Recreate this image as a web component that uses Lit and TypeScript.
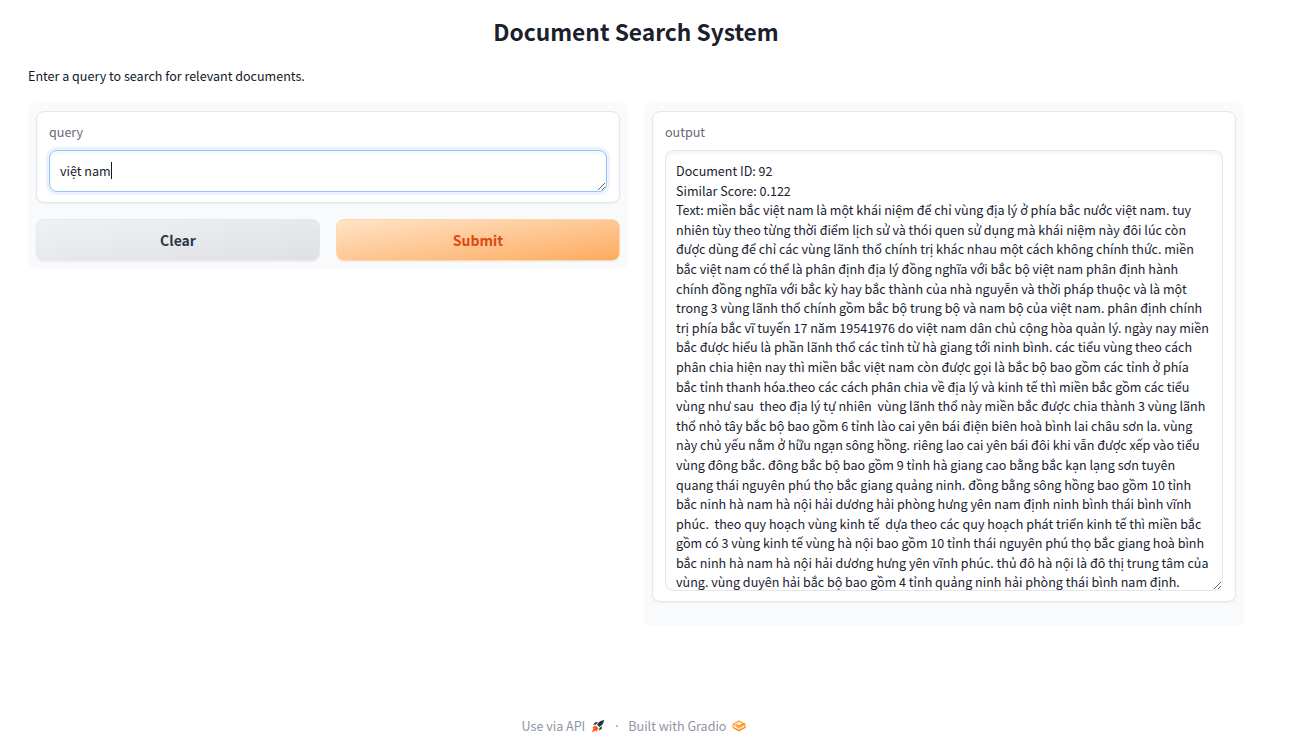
import { LitElement, html, css, svg } from "lit";
import { customElement, query, state } from "lit/decorators.js";

const RESULT = [
  "Document ID: 92",
  "Similar Score: 0.122",
  "Text: miền bắc việt nam là một khái niệm để chỉ vùng địa lý ở phía bắc nước việt nam. tuy",
  "nhiên tùy theo từng thời điểm lịch sử và thói quen sử dụng mà khái niệm này đôi lúc còn",
  "được dùng để chỉ các vùng lãnh thổ chính trị khác nhau một cách không chính thức. miền",
  "bắc việt nam có thể là phân định địa lý đồng nghĩa với bắc bộ việt nam phân định hành",
  "chính đồng nghĩa với bắc kỳ hay bắc thành của nhà nguyễn và thời pháp thuộc và là một",
  "trong 3 vùng lãnh thổ chính gồm bắc bộ trung bộ và nam bộ của việt nam. phân định chính",
  "trị phía bắc vĩ tuyến 17 năm 19541976 do việt nam dân chủ cộng hòa quản lý. ngày nay miền",
  "bắc được hiểu là phần lãnh thổ các tỉnh từ hà giang tới ninh bình. các tiểu vùng theo cách",
  "phân chia hiện nay thì miền bắc việt nam còn được gọi là bắc bộ bao gồm các tỉnh ở phía",
  "bắc tỉnh thanh hóa.theo các cách phân chia về địa lý và kinh tế thì miền bắc gồm các tiểu",
  "vùng như sau  theo địa lý tự nhiên  vùng lãnh thổ này miền bắc được chia thành 3 vùng lãnh",
  "thổ nhỏ tây bắc bộ bao gồm 6 tỉnh lào cai yên bái điện biên hoà bình lai châu sơn la. vùng",
  "này chủ yếu nằm ở hữu ngạn sông hồng. riêng lao cai yên bái đôi khi vẫn được xếp vào tiểu",
  "vùng đông bắc. đông bắc bộ bao gồm 9 tỉnh hà giang cao bằng bắc kạn lạng sơn tuyên",
  "quang thái nguyên phú thọ bắc giang quảng ninh. đồng bằng sông hồng bao gồm 10 tỉnh",
  "bắc ninh hà nam hà nội hải dương hải phòng hưng yên nam định ninh bình thái bình vĩnh",
  "phúc.  theo quy hoạch vùng kinh tế  dựa theo các quy hoạch phát triển kinh tế thì miền bắc",
  "gồm có 3 vùng kinh tế vùng hà nội bao gồm 10 tỉnh thái nguyên phú thọ bắc giang hoà bình",
  "bắc ninh hà nam hà nội hải dương hưng yên vĩnh phúc. thủ đô hà nội là đô thị trung tâm của",
  "vùng. vùng duyên hải bắc bộ bao gồm 4 tỉnh quảng ninh hải phòng thái bình nam định.",
].join("\n");

const rocket = svg`
  <path d="M15 1C12 1.400 9.700 2.700 8.200 4.600L7 6.500 9.500 9 11.400 7.800C13.300 6.300 14.500 4 15 1z" fill="#1f3340"/>
  <path d="M8 3.500 4.800 3.800 2.600 6.700 5.800 6.300z" fill="#1f3340"/>
  <path d="M12.500 8 12.200 11.200 9.300 13.400 9.700 10.200z" fill="#1f3340"/>
  <path d="M5.300 7.400 1.500 9.800 2.800 10.600 1 15 5.600 13.200 6.300 14.500 8.600 10.600z" fill="#ff5a10"/>`;

const gradio = svg`
  <path d="M8 2.300 14.800 6 8 9.700 1.200 6z" fill="#fff3df" stroke="#fba23a" stroke-width="1.600" stroke-linejoin="round"/>
  <path d="M1.200 9.600 8 13.400l6.800-3.800V7.400" fill="none" stroke="#f98a12" stroke-width="1.600" stroke-linejoin="round"/>
  <path d="M1.200 6v3.600" fill="none" stroke="#fba23a" stroke-width="1.200"/>
  <path d="M5 6.300 8 8l6.500-3" fill="none" stroke="#f98a12" stroke-width="1.300"/>
  <path d="M4.500 9.600 8 11.300 12 9.200" fill="none" stroke="#fcc98a" stroke-width="1"/>`;

@customElement("app-root")
export class AppRoot extends LitElement {
  @state() private text = "việt nam";
  @state() private output = RESULT;
  @query("#query") private field!: HTMLTextAreaElement;

  static styles = css`
    :host {
      display: block;
      box-sizing: border-box;
      padding: 16px 68px 16px 28px;
      background: #fff;
      color: #1a2230;
      font-family: "Source Sans Pro", "Noto Sans CJK JP", "Noto Sans", sans-serif;
      font-size: 14px;
      /* keeps fallback faces at the x-height of Source Sans */
      font-size-adjust: 0.487;
      line-height: 20px;
    }
    * { box-sizing: border-box; }
    h1 {
      margin: 0 0 18px;
      font-size: 26px;
      font-size-adjust: 0.475;
      line-height: 32px;
      font-weight: 600;
      text-align: center;
      color: #1a202c;
    }
    .intro { margin: 0 0 17px; color: #111827; }
    .columns {
      display: grid;
      grid-template-columns: 1fr 1fr;
      align-items: start;
      gap: 16px;
    }
    .panel {
      display: flex;
      flex-direction: column;
      gap: 16px;
      padding: 8px;
      border-radius: 8px;
      background: #f9fafb;
    }
    .results { padding-bottom: 24px; }
    .block {
      position: relative;
      display: flex;
      flex-direction: column;
      gap: 8px;
      padding: 10px 12px;
      border: 1px solid #e5e7eb;
      border-radius: 8px;
      background: #fff;
      box-shadow: 0 1px 2px rgba(0, 0, 0, 0.05);
    }
    label { color: #646a79; }
    textarea {
      display: block;
      width: 100%;
      margin: 0;
      padding: 10px;
      border: 1px solid #e5e7eb;
      border-radius: 8px;
      outline: none;
      background: #fff;
      box-shadow: inset 0 2px 4px rgba(0, 0, 0, 0.05);
      color: inherit;
      font: inherit;
      font-size-adjust: inherit;
      line-height: 1.4;
      overflow: hidden;
      resize: vertical;
    }
    .query { height: 42px; caret-color: transparent; }
    .query:focus {
      border-color: #93c5fd;
      box-shadow: 0 0 0 3px rgba(219, 234, 254, 0.6), inset 0 2px 4px rgba(0, 0, 0, 0.05);
    }
    .caret {
      position: absolute;
      left: 74px;
      top: 50px;
      width: 1px;
      height: 17px;
      background: #111827;
    }
    .output { height: 441px; }
    .actions { display: grid; grid-template-columns: 1fr 1fr; gap: 16px; }
    button {
      height: 42px;
      padding: 0 16px;
      border: 1px solid #e5e7eb;
      border-radius: 8px;
      background: linear-gradient(to bottom right, #f0f1f3, #dfe0e5);
      box-shadow: 0 1px 2px rgba(0, 0, 0, 0.05);
      color: #2f3946;
      font: inherit;
      font-size: 16px;
      font-size-adjust: 0.475;
      font-weight: 600;
      cursor: pointer;
    }
    .primary {
      border-color: #fed7aa;
      background: linear-gradient(to bottom right, #ffe4c7, #fdab60);
      color: #dd4811;
    }
    footer {
      display: flex;
      justify-content: center;
      align-items: center;
      gap: 8px;
      margin-top: 90px;
      padding-right: 4px;
      color: #9095a4;
    }
    footer a { display: flex; align-items: center; gap: 6px; color: inherit; text-decoration: none; }
    footer svg { width: 14px; height: 14px; }
  `;

  firstUpdated() {
    this.field.focus();
    this.field.setSelectionRange(this.text.length, this.text.length);
  }

  private clear() {
    this.text = "";
    this.output = "";
  }

  render() {
    return html`
      <h1>Document Search System</h1>
      <p class="intro">Enter a query to search for relevant documents.</p>
      <main class="columns">
        <section class="panel">
          <div class="block">
            <label for="query">query</label>
            <textarea id="query" class="query" rows="1" spellcheck="false" .value=${this.text}
              @input=${(e: Event) => (this.text = (e.target as HTMLTextAreaElement).value)}></textarea>
            ${this.text === "việt nam" ? html`<span class="caret"></span>` : ""}
          </div>
          <div class="actions">
            <button type="button" @click=${this.clear}>Clear</button>
            <button type="button" class="primary">Submit</button>
          </div>
        </section>
        <section class="panel results">
          <div class="block">
            <label for="output">output</label>
            <textarea id="output" class="output" readonly spellcheck="false" .value=${this.output}></textarea>
          </div>
        </section>
      </main>
      <footer>
        <a href="#api">Use via API <svg viewBox="0 0 16 16" aria-hidden="true">${rocket}</svg></a>
        <span>·</span>
        <a href="#gradio">Built with Gradio <svg viewBox="0 0 16 16" aria-hidden="true">${gradio}</svg></a>
      </footer>
    `;
  }
}
